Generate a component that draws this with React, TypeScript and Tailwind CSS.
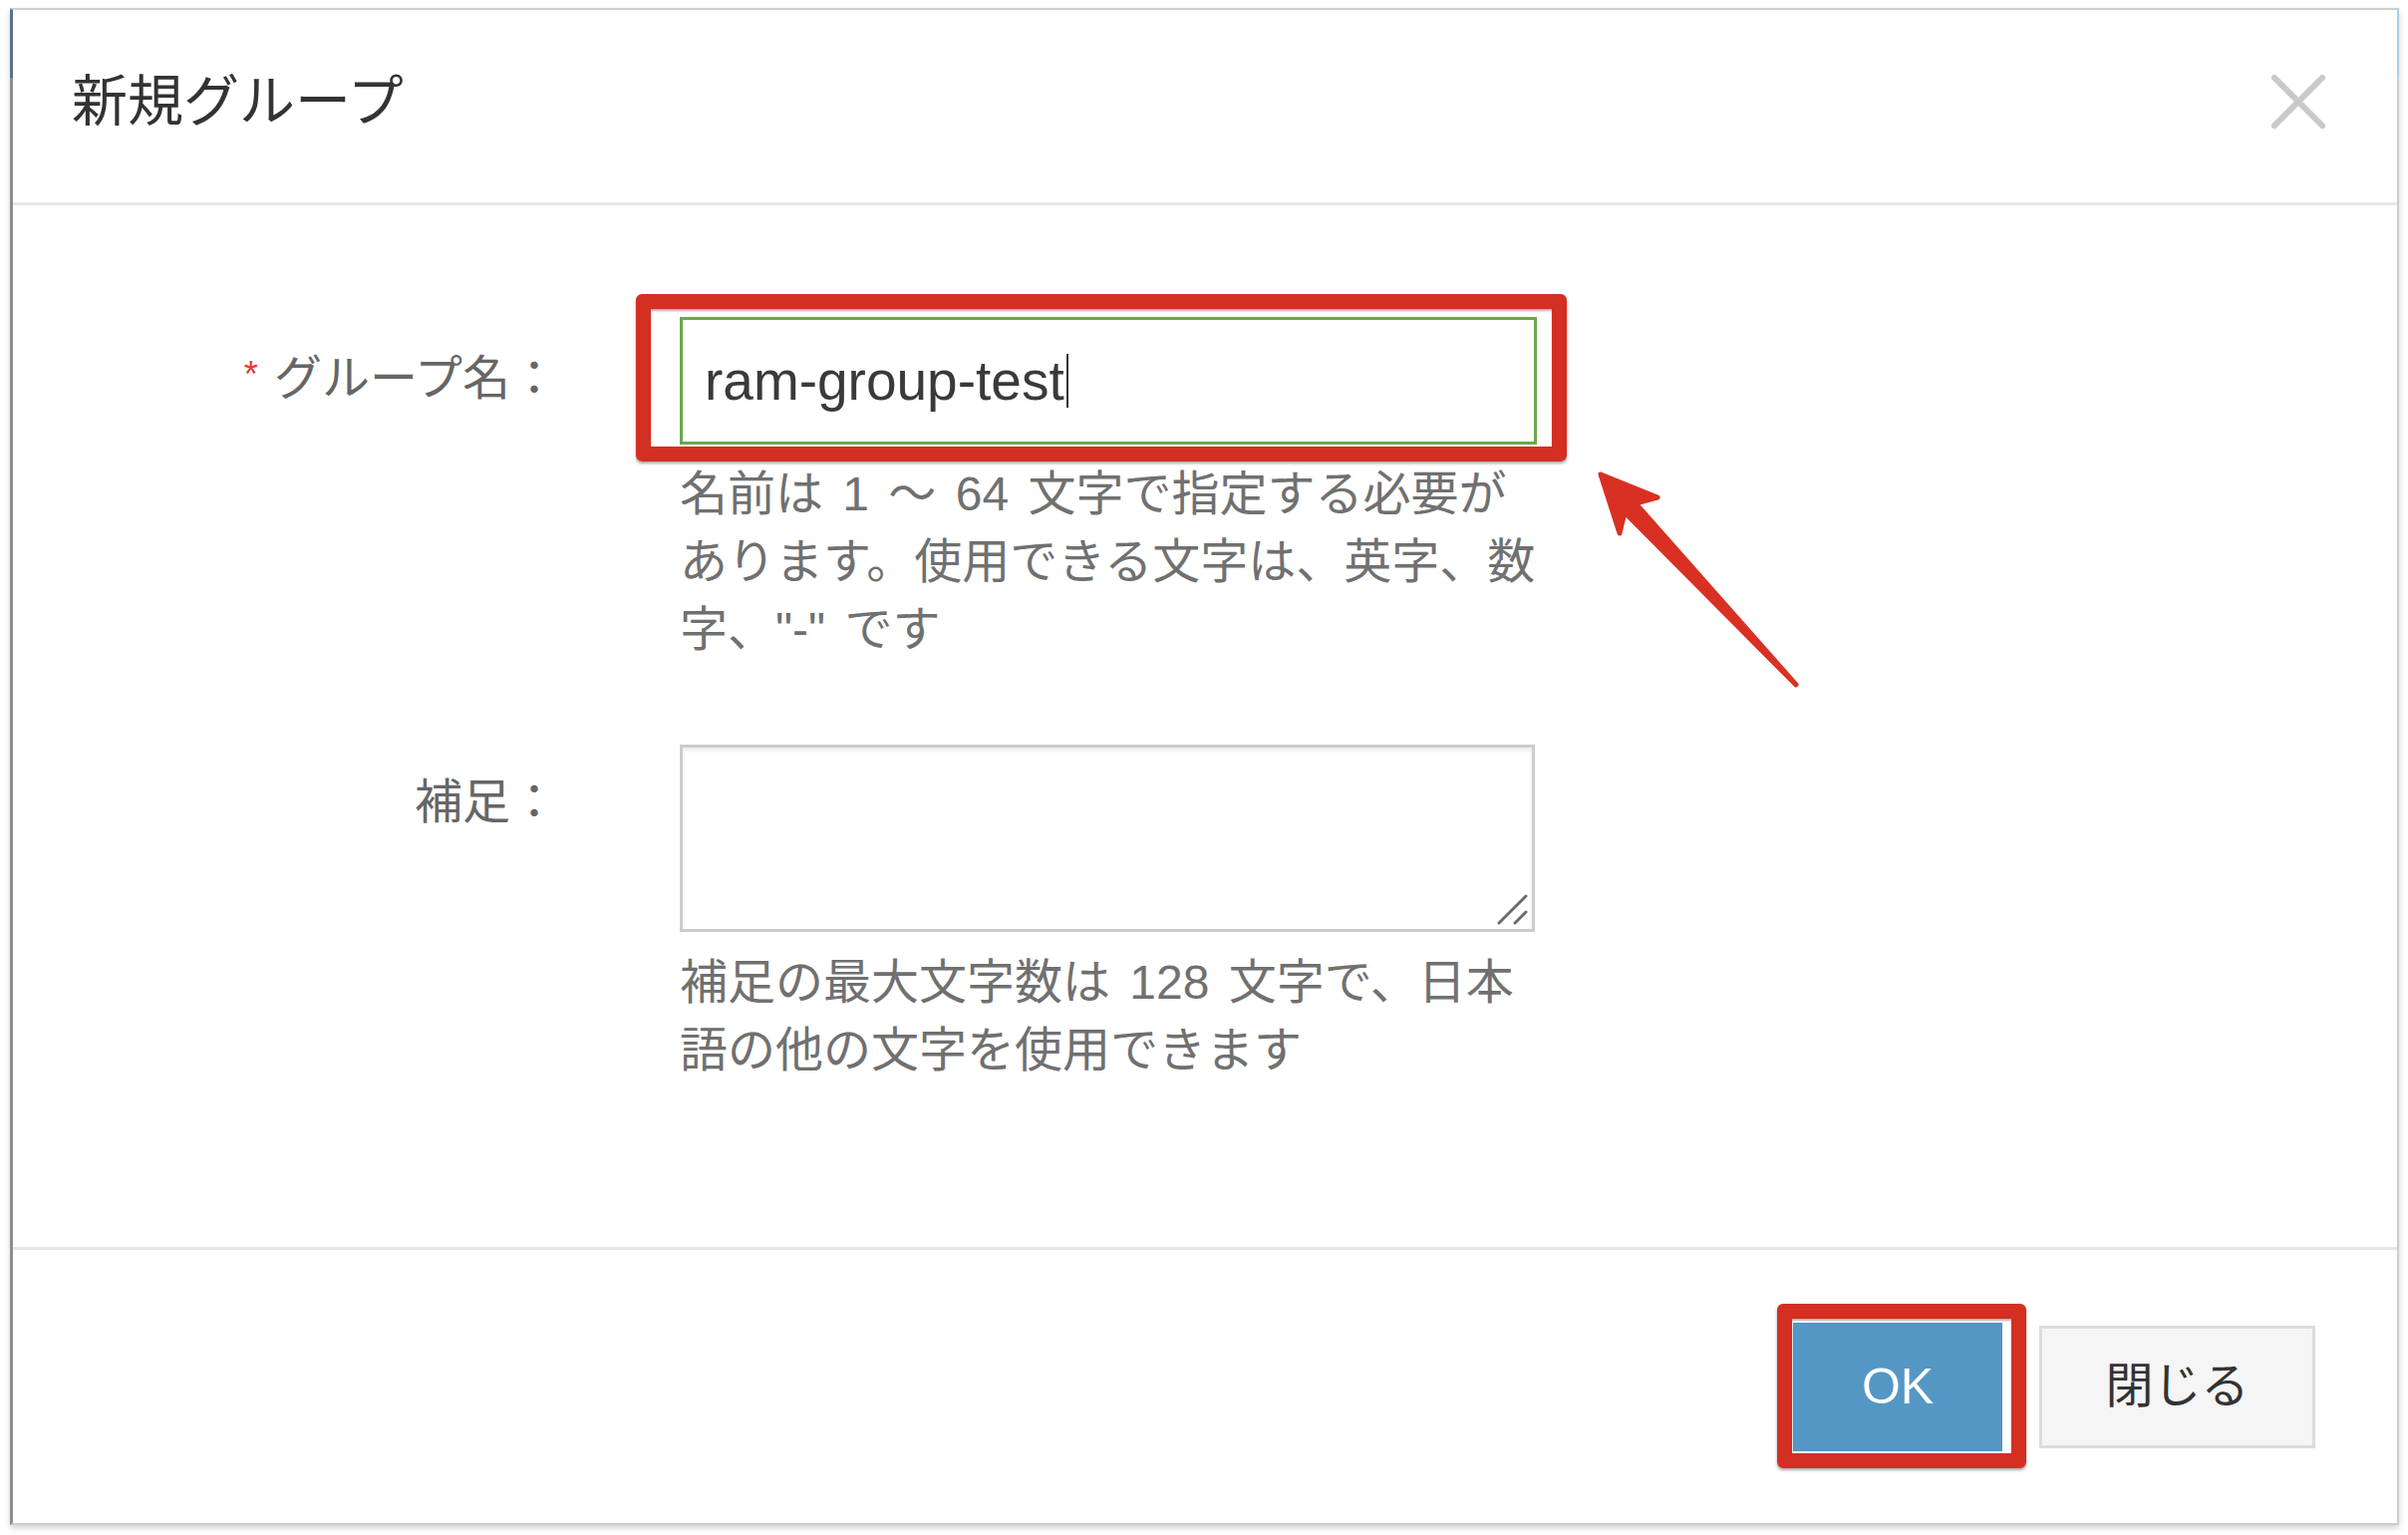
import React from 'react';

// Red annotation frame drawn over a control
const Highlight: React.FC<{ className: string }> = ({ className }) => (
  <div
    className={`pointer-events-none absolute rounded-[6px] border-[15px] border-[#d32f22] shadow-[0_2px_3px_rgba(0,0,0,0.35),inset_0_2px_2px_rgba(0,0,0,0.3)] ${className}`}
  />
);

const CloseIcon = () => (
  <svg width="54" height="54" viewBox="0 0 54 54">
    <path d="M3 3 L51 51 M51 3 L3 51" stroke="#c9c9c9" strokeWidth="6" strokeLinecap="square" />
  </svg>
);

const ResizeHandle = () => (
  <svg width="34" height="34" viewBox="0 0 34 34" className="absolute bottom-[2px] right-[2px]">
    <path d="M3 30 L30 3 M19 30 L30 19" stroke="#6b6b6b" strokeWidth="3" strokeLinecap="round" />
  </svg>
);

const Arrow = () => (
  <svg width="230" height="240" viewBox="1590 465 230 240" className="pointer-events-none absolute left-[1590px] top-[465px]">
    <polygon
      points="1606,476 1663,499 1641,505 1802,687 1630,514 1625,535"
      fill="#d93024"
      stroke="#d93024"
      strokeWidth="5"
      strokeLinejoin="round"
    />
  </svg>
);

export default function App() {
  return (
    <div className="relative w-[2416px] h-[1540px] bg-white pt-[8px] pl-[10px] font-['Liberation_Sans','Noto_Sans_CJK_JP',sans-serif]">
      {/* Dialog */}
      <div className="relative flex h-[1522px] w-[2397px] flex-col border-t-2 border-r-2 border-b-2 border-l-[3px] border-[#cdcdcd] border-l-[#8e8e8e] bg-white shadow-[0_3px_6px_rgba(0,0,0,0.18)]">
        <div className="absolute -left-[3px] top-0 h-[68px] w-[3px] bg-[#5d7185]" />
        <div className="absolute -right-[2px] top-0 h-[68px] w-[2px] bg-[#a9cfee]" />

        {/* Header */}
        <div className="flex h-[193px] items-center justify-between pb-[10px] pl-[59px] pr-[72px]">
          <h2 className="text-[56px] leading-none text-[#333]">新規グループ</h2>
          <CloseIcon />
        </div>
        <div className="h-[3px] bg-[#e6e6e6]" />

        {/* Body */}
        <div className="flex-1 pt-[112px]">
          {/* Group name row */}
          <div className="flex">
            <div className="w-[547px] pt-[24px] text-right text-[48px] leading-[68px] text-[#666]">
              <span className="mr-[16px] align-[8px] text-[36px] text-[#e5372c]">*</span>
              グループ名：
            </div>
            <div className="ml-[122px] w-[860px]">
              <div className="relative">
                <div className="flex h-[128px] items-center border-[3px] border-[#6aa84f] pl-[22px] text-[55px] text-[#3a3a3a]">
                  ram-group-test
                  <span className="ml-[2px] h-[54px] w-[2px] bg-[#333]" />
                </div>
                <Highlight className="-left-[44px] -right-[30px] -top-[23px] -bottom-[17px]" />
              </div>
              <div className="mt-[16px] text-[48px] leading-[68px] text-[#707070] [word-spacing:6px]">
                <div className="whitespace-nowrap">名前は 1 ～ 64 文字で指定する必要が</div>
                <div className="whitespace-nowrap">あります。使用できる文字は、英字、数</div>
                <div className="whitespace-nowrap">字、"-" です</div>
              </div>
            </div>
          </div>

          {/* Note row */}
          <div className="mt-[81px] flex">
            <div className="w-[547px] pt-[24px] text-right text-[48px] leading-[68px] text-[#666]">補足：</div>
            <div className="ml-[122px] w-[860px]">
              <div className="relative h-[188px] w-[858px] border-[3px] border-[#cccccc] shadow-[inset_0_3px_4px_rgba(0,0,0,0.08)]">
                <ResizeHandle />
              </div>
              <div className="mt-[17px] text-[48px] leading-[68px] text-[#707070] [word-spacing:6px]">
                <div className="whitespace-nowrap">補足の最大文字数は 128 文字で、日本</div>
                <div className="whitespace-nowrap">語の他の文字を使用できます</div>
              </div>
            </div>
          </div>
        </div>

        {/* Footer */}
        <div className="h-[3px] bg-[#e6e6e6]" />
        <div className="flex h-[274px] items-center justify-end gap-[37px] pr-[82px]">
          <div className="relative">
            <button className="flex h-[129px] w-[210px] items-center justify-center bg-[#5497c5] text-[50px] text-white">
              OK
            </button>
            <Highlight className="-left-[16px] -right-[24px] -top-[19px] -bottom-[17px]" />
          </div>
          <button className="flex h-[123px] w-[277px] items-center justify-center border-[3px] border-[#dcdcdc] bg-[#f5f5f5] text-[48px] text-[#333]">
            閉じる
          </button>
        </div>
      </div>

      <Arrow />
    </div>
  );
}
